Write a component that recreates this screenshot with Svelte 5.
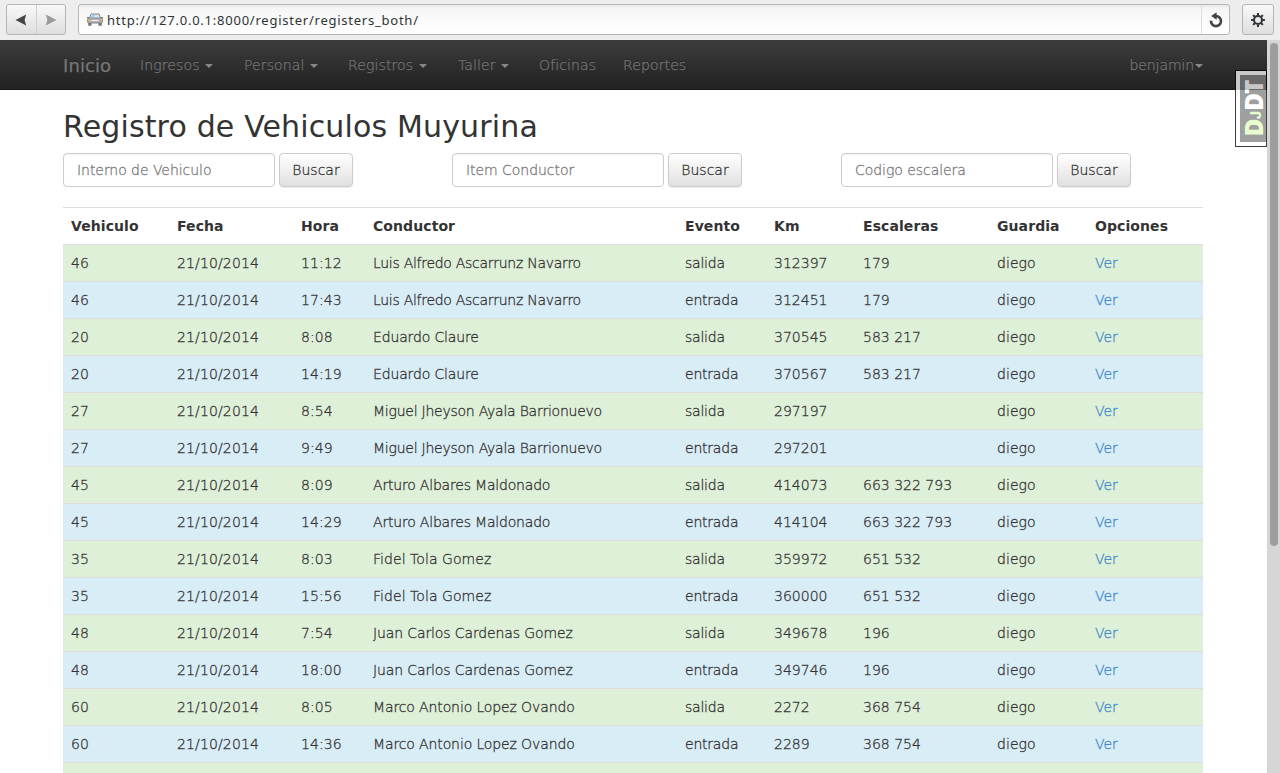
<script>
  const menus = [
    { label: 'Ingresos', width: 104, caret: true },
    { label: 'Personal', width: 104, caret: true },
    { label: 'Registros', width: 110, caret: true },
    { label: 'Taller', width: 81, caret: true },
    { label: 'Oficinas', width: 84, caret: false },
    { label: 'Reportes', width: 94, caret: false }
  ];
  const searches = ['Interno de Vehiculo', 'Item Conductor', 'Codigo escalera'];
  const headings = ['Vehiculo', 'Fecha', 'Hora', 'Conductor', 'Evento', 'Km', 'Escaleras', 'Guardia', 'Opciones'];
  const widths = [106, 124, 72, 312, 89, 89, 134, 98, 116];
  const trips = [
    ['46', '11:12', '17:43', 'Luis Alfredo Ascarrunz Navarro', '312397', '312451', '179', -0.28],
    ['20', '8:08', '14:19', 'Eduardo Claure', '370545', '370567', '583 217', -0.14],
    ['27', '8:54', '9:49', 'Miguel Jheyson Ayala Barrionuevo', '297197', '297201', '', -0.24],
    ['45', '8:09', '14:29', 'Arturo Albares Maldonado', '414073', '414104', '663 322 793', -0.19],
    ['35', '8:03', '15:56', 'Fidel Tola Gomez', '359972', '360000', '651 532', 0.06],
    ['48', '7:54', '18:00', 'Juan Carlos Cardenas Gomez', '349678', '349746', '196', -0.12],
    ['60', '8:05', '14:36', 'Marco Antonio Lopez Ovando', '2272', '2289', '368 754', -0.12]
  ];
  const rows = trips.flatMap(([unit, out, back, driver, kmOut, kmBack, ladders, tracking]) => [
    { kind: 'salida', tracking, cells: [unit, '21/10/2014', out, driver, 'salida', kmOut, ladders, 'diego'] },
    { kind: 'entrada', tracking, cells: [unit, '21/10/2014', back, driver, 'entrada', kmBack, ladders, 'diego'] }
  ]);
  const spacing = (column, tracking) => [0, 0.13, 0.1, tracking, -0.22, 0, 0, 0.05][column];
</script>

<div class="window">
  <header class="toolbar">
    <div class="history">
      <button aria-label="Back"><svg width="12" height="12" viewBox="0 0 12 12"><path d="M11.2 0.5L9.6 6L11.2 11.5L0.5 6Z" fill="#444" /></svg></button>
      <button aria-label="Forward"><svg width="12" height="12" viewBox="0 0 12 12"><path d="M0.8 0.5L2.4 6L0.8 11.5L11.5 6Z" fill="#999" /></svg></button>
    </div>
    <div class="address">
      <svg class="car" width="16" height="14" viewBox="0 0 16 14">
        <path d="M4 1H12L13.7 5.5H2.3Z" fill="#d3e6f3" stroke="#858585" />
        <path d="M4.2 3.6L6.5 1.5H9L5.5 5Z" fill="#9fc6e2" />
        <rect x="0.5" y="5" width="15" height="5" rx="1.5" fill="#b2b4bc" stroke="#85868d" />
        <path d="M0 4.5H2M14 4.5H16" stroke="#777" />
        <path d="M4.5 7.5H11.5" stroke="#eef" />
        <path d="M1 6H2.5V8.5H1ZM13.5 6H15V8.5H13.5Z" fill="#ffa62e" />
        <path d="M1.2 10H4.5V12.8H1.2ZM11.5 10H14.8V12.8H11.5Z" fill="#777" />
      </svg>
      <span class="url">http://127.0.0.1:8000/register/registers_both/</span>
      <span class="reload">
        <svg width="16" height="16" viewBox="0 0 16 16"><path d="M3 8.6A5 5 0 1 0 8 4.1" fill="none" stroke="#444" stroke-width="2.6" /><path d="M8.6 0.3V7.8L3.2 4Z" fill="#444" /></svg>
      </span>
    </div>
    <button class="settings" aria-label="Settings">
      <svg width="14" height="14" viewBox="-7 -7 14 14">
        <circle r="4" fill="none" stroke="#2e3436" stroke-width="2" />
        {#each [0, 45, 90, 135, 180, 225, 270, 315] as angle}
          <path d="M0 -4.5V-6.9" stroke="#2e3436" stroke-width="2" transform="rotate({angle})" />
        {/each}
      </svg>
    </button>
  </header>

  <div class="viewport">
    <div class="page">
      <nav>
        <span class="brand">Inicio</span>
        {#each menus as menu}
          <span class="item" style="width: {menu.width}px">{menu.label}{#if menu.caret}<i class="caret"></i>{/if}</span>
        {/each}
        <span class="item user">benjamin<i class="caret"></i></span>
      </nav>
      <main>
        <h2>Registro de Vehiculos Muyurina</h2>
        <div class="searches">
          {#each searches as hint}
            <form><input placeholder={hint} /><button type="button">Buscar</button></form>
          {/each}
        </div>
        <table>
          <colgroup>{#each widths as width}<col style="width: {width}px" />{/each}</colgroup>
          <thead><tr>{#each headings as heading}<th>{heading}</th>{/each}</tr></thead>
          <tbody>
            {#each rows as row}
              <tr class={row.kind}>
                {#each row.cells as cell, column}<td style="letter-spacing: {spacing(column, row.tracking)}px">{cell}</td>{/each}
                <td class="link">Ver</td>
              </tr>
            {/each}
            <tr class="salida"><td colspan="9"></td></tr>
          </tbody>
        </table>
      </main>
      <div class="debug"><div><span><b>D<small>J</small></b>DT</span></div></div>
    </div>
    <div class="scrollbar"><div class="thumb"></div></div>
  </div>
</div>

<style>
  :global(body) { margin: 0; overflow: hidden; }
  .window { width: 1280px; height: 773px; overflow: hidden; display: flex; flex-direction: column; font: 200 14px/20px "DejaVu Sans", sans-serif; color: #333; background: #fff; }
  .window * { box-sizing: border-box; }
  button, input { font: inherit; color: inherit; margin: 0; }
  .toolbar { flex: none; height: 40px; background: #ededed; display: flex; padding: 4px 6px 5px; }
  .history { display: flex; width: 60px; border: 1px solid #b4b6b4; border-radius: 3px; background: linear-gradient(#f8f8f8, #dedede); }
  .history button { flex: 1; border: 0; padding: 0; background: none; display: flex; align-items: center; justify-content: center; }
  .history button + button { border-left: 1px solid #cfcfcf; }
  .address { width: 1152px; margin: 0 12px; border: 1px solid #b4b6b4; border-radius: 3px; background: linear-gradient(#e9e9e9, #f6f6f6 4px, #fff); display: flex; align-items: center; }
  .car { margin: 0 4px 0 8px; }
  .url { font: 400 13px/20px "Noto Sans", sans-serif; letter-spacing: .76px; color: #2e3436; flex: 1; white-space: nowrap; }
  .reload { width: 28px; height: 100%; border-left: 1px solid #ddd; display: flex; align-items: center; justify-content: center; }
  .settings { width: 32px; padding: 0; border: 1px solid #b4b6b4; border-radius: 3px; background: linear-gradient(#f8f8f8, #dedede); display: flex; align-items: center; justify-content: center; }
  .viewport { flex: 1; display: flex; min-height: 0; }
  .page { position: relative; width: 1267px; }
  nav { height: 50px; padding: 0 64px 0 63px; display: flex; align-items: center; background: linear-gradient(#3c3c3c, #222); border-bottom: 1px solid #181818; color: #777; text-shadow: 0 -1px 0 rgba(0, 0, 0, .25); }
  .brand { width: 77px; font-size: 18px; font-weight: 400; letter-spacing: .1px; padding-top: 2px; -webkit-text-stroke: .25px #777; }
  .item { white-space: nowrap; letter-spacing: .12px; -webkit-text-stroke: .25px #777; }
  .item.user { margin-left: auto; letter-spacing: -.1px; }
  .caret { display: inline-block; border: 4px solid transparent; border-top-color: #888; border-bottom: 0; margin-left: 5.4px; vertical-align: middle; }
  .user .caret { margin-left: 1px; }
  main { padding: 20px 0 0 63px; width: 1203px; }
  h2 { font-size: 30px; line-height: 33px; font-weight: 400; letter-spacing: .15px; margin: 0 0 10px; white-space: nowrap; }
  .searches { display: grid; grid-template-columns: repeat(3, 389px); height: 34px; margin-bottom: 20px; }
  form { display: flex; gap: 4px; margin: 0; }
  input { width: 212px; height: 34px; padding: 6px 13px; border: 1px solid #ccc; border-radius: 4px; box-shadow: inset 0 1px 1px rgba(0, 0, 0, .05); }
  input::placeholder { color: #777; opacity: 1; letter-spacing: -.05px; -webkit-text-stroke: .28px #777; }
  form button { width: 74px; height: 34px; padding: 0; border: 1px solid #ccc; border-radius: 4px; background: linear-gradient(#fff, #e0e0e0); box-shadow: 0 1px 1px rgba(0, 0, 0, .08); text-shadow: 0 1px 0 #fff; -webkit-text-stroke: .3px #333; }
  table { width: 1140px; table-layout: fixed; border-spacing: 0; }
  th, td { height: 37px; padding: 8px; border-top: 1px solid #ddd; text-align: left; white-space: nowrap; }
  th { font-weight: 700; letter-spacing: .08px; }
  td { -webkit-text-stroke: .3px currentColor; }
  .salida { background: #dff0d8; }
  .entrada { background: #d9edf7; }
  .link { color: #428bca; }
  .debug { position: absolute; top: 30px; right: 0; width: 32px; height: 77px; border: 1px solid #000; background: #fff; opacity: .75; padding: 4px 0 4px 4px; }
  .debug div { width: 100%; height: 100%; background: #808080; display: flex; align-items: center; justify-content: center; }
  .debug span { writing-mode: vertical-rl; transform: translateX(1px) rotate(180deg); color: #fff; font: 800 24px/26px "Open Sans", sans-serif; letter-spacing: -.5px; white-space: nowrap; }
  .debug b { color: #dfffc0; font-weight: 800; }
  .debug small { font: 800 14px/14px Inter, sans-serif; letter-spacing: 0; position: relative; left: -2px; }
  .scrollbar { width: 13px; background: #d6d6d6; padding: 3px 2px 0 3px; }
  .thumb { width: 8px; height: 503px; border-radius: 4px; background: #9c9ea0; }
</style>
